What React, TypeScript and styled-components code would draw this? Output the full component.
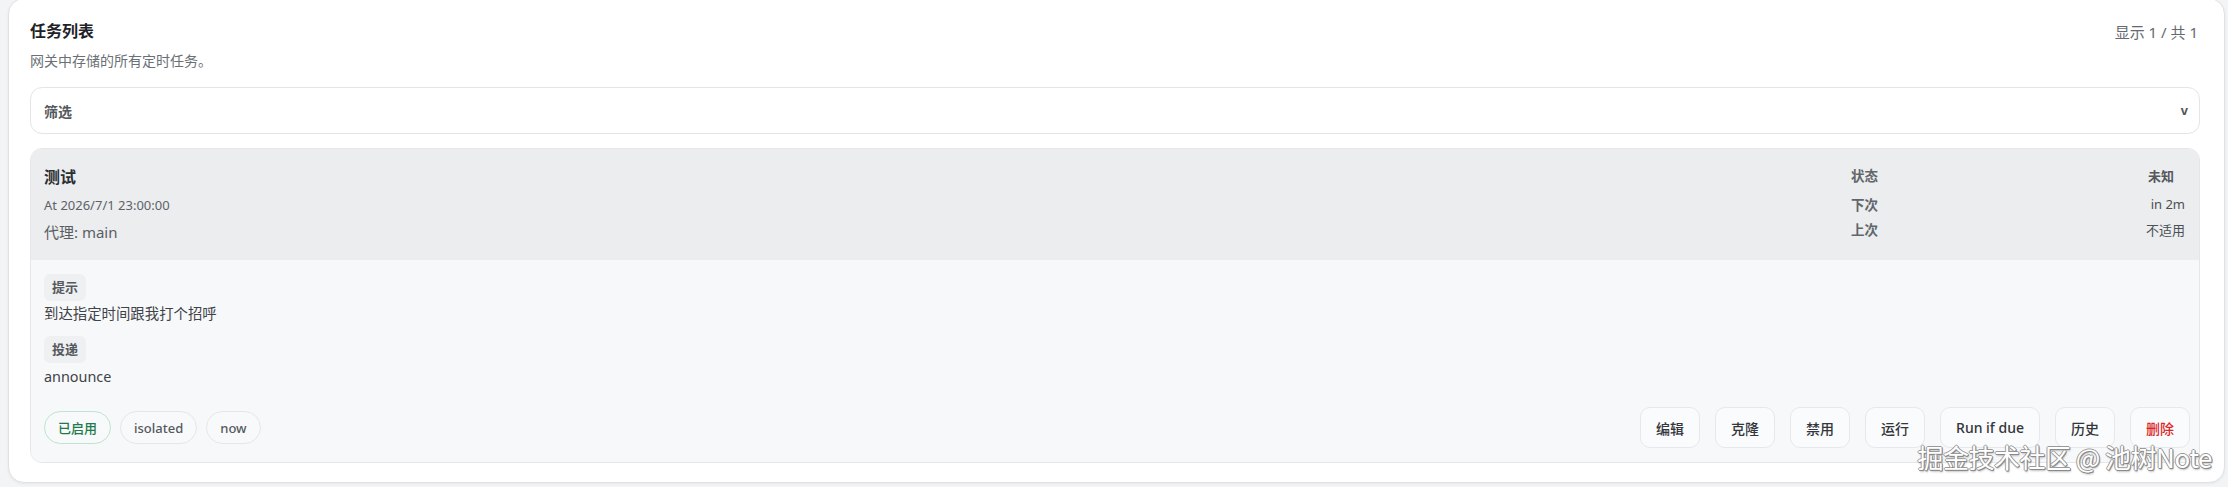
import React from "react";
import styled, { createGlobalStyle } from "styled-components";

const Global = createGlobalStyle`
  html, body { margin: 0; padding: 0; background: #f3f4f6; }
  body { font-family: "Noto Sans", "Noto Sans CJK SC", sans-serif; -webkit-font-smoothing: antialiased; }
  * { box-sizing: border-box; }
`;

const Page = styled.div`
  position: relative;
  width: 2228px;
  height: 487px;
  padding: 0 3px 0 8px;
  overflow: hidden;
`;

const Panel = styled.section`
  margin-top: -2px;
  background: #ffffff;
  border: 1px solid #dfe1e5;
  border-radius: 16px;
  padding: 20px 24px 19px 21px;
  box-shadow: 0 1px 3px rgba(0, 0, 0, 0.06);
`;

const PanelHead = styled.div`
  display: flex;
  justify-content: space-between;
  align-items: flex-start;
`;

const Title = styled.h2`
  margin: 0;
  font-size: 16px;
  line-height: 24px;
  font-weight: 700;
  color: #1f2328;
`;

const Subtitle = styled.p`
  margin: 9px 0 0;
  font-size: 14px;
  line-height: 18px;
  color: #6b7075;
`;

const Count = styled.div`
  font-size: 15px;
  line-height: 24px;
  color: #666a70;
  padding-right: 2px;
  margin-top: 1px;
`;

const Filter = styled.div`
  margin-top: 17px;
  height: 47px;
  border: 1px solid #e3e5e8;
  border-radius: 12px;
  background: #fff;
  display: flex;
  align-items: center;
  justify-content: space-between;
  padding: 0 11px 0 13px;
  font-size: 14px;
  font-weight: 700;
  color: #55585d;
`;

const Chevron = styled.span`
  font-family: "Liberation Sans", sans-serif;
  font-size: 13px;
  font-weight: 700;
  color: #555;
`;

const Task = styled.article`
  margin-top: 14px;
  border: 1px solid #e4e6e9;
  border-radius: 12px;
  overflow: hidden;
`;

const TaskHead = styled.div`
  background: #ebedef;
  padding: 16px 14px 17px 13px;
  display: flex;
  justify-content: space-between;
  align-items: flex-start;
`;

const TaskName = styled.div`
  font-size: 16px;
  line-height: 24px;
  font-weight: 700;
  color: #2b2e32;
`;

const Schedule = styled.div`
  margin-top: 6px;
  font-size: 13px;
  line-height: 20px;
  color: #5e6267;
`;

const Agent = styled.div`
  margin-top: 6px;
  font-size: 15px;
  line-height: 22px;
  color: #5a5e63;
`;

const Meta = styled.dl`
  margin: -4px 0 0;
  width: 334px;
  display: grid;
  grid-template-columns: auto auto;
  grid-template-rows: 28px 20px 20px;
  row-gap: 5px;
  align-items: center;
`;

const MetaLabel = styled.dt`
  font-size: 13.5px;
  font-weight: 700;
  color: #62666b;
`;

const MetaValue = styled.dd<{ $strong?: boolean }>`
  margin: 0;
  justify-self: end;
  font-size: 13px;
  font-weight: ${(p) => (p.$strong ? 700 : 400)};
  color: ${(p) => (p.$strong ? "#55585d" : "#4d5055")};
  padding-right: ${(p) => (p.$strong ? "11px" : "0")};
`;

const TaskBody = styled.div`
  background: #f7f8fa;
  padding: 14px 9px 14px 13px;
`;

const FieldLabel = styled.div<{ $gap?: number }>`
  display: inline-block;
  margin-top: ${(p) => p.$gap ?? 0}px;
  height: 27px;
  line-height: 27px;
  padding: 0 8px;
  border-radius: 6px;
  background: #eef0f2;
  font-size: 13px;
  font-weight: 700;
  color: #55585d;
`;

const FieldText = styled.div<{ $gap: number }>`
  margin-top: ${(p) => p.$gap}px;
  font-size: 14.4px;
  line-height: 20px;
  color: #3f4247;
`;

const Footer = styled.div`
  margin-top: 20px;
  display: flex;
  justify-content: space-between;
  align-items: center;
`;

const Pills = styled.div`
  display: flex;
  gap: 9px;
`;

const Pill = styled.span<{ $ok?: boolean }>`
  height: 33px;
  display: inline-flex;
  align-items: center;
  padding: 0 13px;
  border-radius: 999px;
  border: 1px solid ${(p) => (p.$ok ? "#bfe3cc" : "#e4e6e9")};
  background: #f8f9fa;
  font-size: 13px;
  font-weight: 500;
  color: ${(p) => (p.$ok ? "#1f7a4c" : "#55595e")};
`;

const Actions = styled.div`
  display: flex;
  gap: 15px;
`;

const Action = styled.button<{ $danger?: boolean }>`
  height: 41px;
  padding: 0 15px;
  border-radius: 10px;
  border: 1px solid #e6e8eb;
  background: #fafbfc;
  font-family: "Noto Sans", "Noto Sans CJK SC", sans-serif;
  font-size: 14px;
  font-weight: 500;
  color: ${(p) => (p.$danger ? "#dc2626" : "#33363a")};
  cursor: pointer;
`;

const Watermark = styled.div`
  position: absolute;
  right: 16px;
  bottom: 17px;
  font-family: "Noto Sans CJK SC", "Noto Sans", sans-serif;
  font-size: 26px;
  line-height: 26px;
  color: #ffffff;
  letter-spacing: -0.5px;
  text-shadow: 1px 1px 0 #8a8a8a, -1px 0 0 #9a9a9a, 0 -1px 0 #9a9a9a, 1px 0 0 #8a8a8a,
    0 1px 0 #8a8a8a, 1px 2px 2px rgba(0, 0, 0, 0.25);
  pointer-events: none;
`;

export default function App() {
  const actions = ["编辑", "克隆", "禁用", "运行", "Run if due", "历史"];
  return (
    <Page>
      <Global />
      <Panel>
        <PanelHead>
          <div>
            <Title>任务列表</Title>
            <Subtitle>网关中存储的所有定时任务。</Subtitle>
          </div>
          <Count>显示 1 / 共 1</Count>
        </PanelHead>
        <Filter>
          <span>筛选</span>
          <Chevron>v</Chevron>
        </Filter>
        <Task>
          <TaskHead>
            <div>
              <TaskName>测试</TaskName>
              <Schedule>At 2026/7/1 23:00:00</Schedule>
              <Agent>代理: main</Agent>
            </div>
            <Meta>
              <MetaLabel>状态</MetaLabel>
              <MetaValue $strong>未知</MetaValue>
              <MetaLabel>下次</MetaLabel>
              <MetaValue>in 2m</MetaValue>
              <MetaLabel>上次</MetaLabel>
              <MetaValue>不适用</MetaValue>
            </Meta>
          </TaskHead>
          <TaskBody>
            <FieldLabel>提示</FieldLabel>
            <FieldText $gap={3}>到达指定时间跟我打个招呼</FieldText>
            <FieldLabel $gap={12}>投递</FieldLabel>
            <FieldText $gap={4}>announce</FieldText>
            <Footer>
              <Pills>
                <Pill $ok>已启用</Pill>
                <Pill>isolated</Pill>
                <Pill>now</Pill>
              </Pills>
              <Actions>
                {actions.map((a) => (
                  <Action key={a}>{a}</Action>
                ))}
                <Action $danger>删除</Action>
              </Actions>
            </Footer>
          </TaskBody>
        </Task>
      </Panel>
      <Watermark>掘金技术社区 @ 池树Note</Watermark>
    </Page>
  );
}
